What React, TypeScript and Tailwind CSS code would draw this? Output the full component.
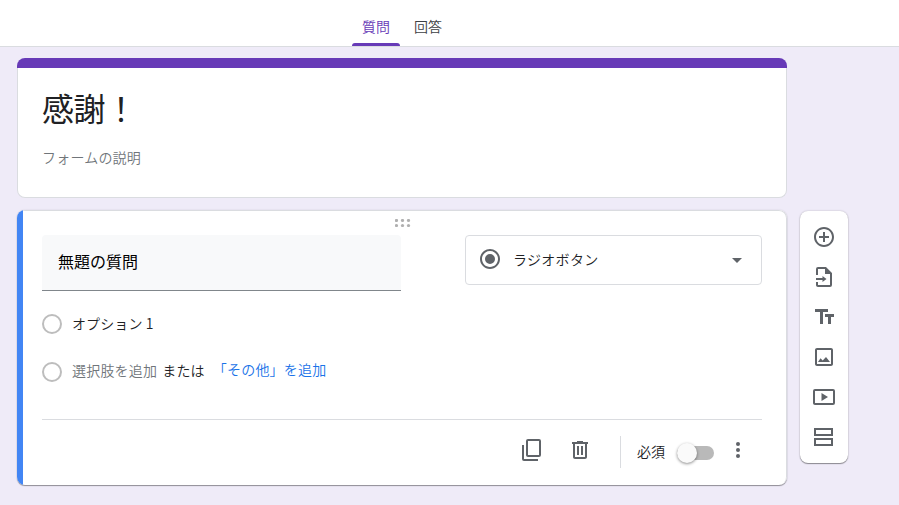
import type { ReactNode } from "react";

function Icon({ children, className = "" }: { children: ReactNode; className?: string }) {
  return (
    <svg viewBox="0 0 24 24" className={`block size-6 shrink-0 fill-[#5f6368] ${className}`}>
      {children}
    </svg>
  );
}

function Header() {
  return (
    <header className="flex h-[47px] border-b border-[#dadce0] bg-white pl-[352px] text-[14px] leading-5">
      <div className="flex h-[46px] w-12 flex-col justify-between pt-4 text-[#673ab7]">
        <span className="text-center">質問</span>
        <div className="h-[3px] rounded-t-[3px] bg-[#673ab7]" />
      </div>
      <div className="ml-1 w-12 pt-4 text-center text-[#3c4043]">回答</div>
    </header>
  );
}

function TitleCard() {
  return (
    <section className="h-[140px]">
      <div className="h-2.5 rounded-t-lg bg-[#673ab7]" />
      <div className="flow-root h-[130px] rounded-b-lg border border-t-0 border-[#dadce0] bg-white">
        <h1 className="ml-6 mt-[19px] text-[32px] font-normal leading-10 tracking-[-0.5px] text-[#202124]">感謝！</h1>
        <p className="ml-6 mt-5 text-[14px] leading-5 tracking-[0.2px] text-[#70757a]">フォームの説明</p>
      </div>
    </section>
  );
}

function DragHandle() {
  return (
    <svg viewBox="0 0 16 8" className="mx-auto block h-2 w-4 fill-[#b0b0b0]">
      {[1.5, 7.5, 13.5].map((x) => (
        <g key={x}>
          <circle cx={x} cy="1.5" r="1.6" />
          <circle cx={x} cy="6.5" r="1.6" />
        </g>
      ))}
    </svg>
  );
}

function Radio() {
  return <span className="size-5 shrink-0 rounded-full border-2 border-[#bdbdbd]" />;
}

function QuestionCard() {
  return (
    <section className="mt-3 flex h-[275px] overflow-hidden rounded-lg bg-white shadow-[0_1px_1px_rgba(0,0,0,0.38),0_0_2px_rgba(0,0,0,0.12)]">
      <div className="w-1.5 shrink-0 bg-[#4285f4]" />
      <div className="flex-1 rounded-r-lg border-r border-t border-[#dadce0] pl-[19px] pr-6 pt-2">
        <div className="pl-px">
          <DragHandle />
        </div>
        <div className="mt-2 flex justify-between">
          <div className="h-14 w-[359px] rounded-t border-b border-[#80868b] bg-[#f8f9fa] pl-4 pt-3.5 text-[16px] font-normal leading-6 text-black">
            無題の質問
          </div>
          <div className="flex h-[50px] w-[297px] items-center rounded border border-[#dadce0] px-3 text-[14px] text-[#202124]">
            <Icon className="mb-0.5">
              <path d="M12 7a5 5 0 1 0 0 10 5 5 0 0 0 0-10zm0-5C6.48 2 2 6.48 2 12s4.48 10 10 10 10-4.48 10-10S17.52 2 12 2zm0 18c-4.42 0-8-3.58-8-8s3.58-8 8-8 8 3.58 8 8-3.58 8-8 8z" />
            </Icon>
            <span className="mb-0.5 ml-[11px] flex-1 leading-5 tracking-[0.3px]">ラジオボタン</span>
            <Icon>
              <path d="M7 10l5 5 5-5z" />
            </Icon>
          </div>
        </div>
        <div className="mt-[23px] flex h-5 items-center text-[14px] leading-5 tracking-[0.1px] text-[#202124]">
          <Radio />
          <span className="mb-0.5 ml-2.5">オプション 1</span>
        </div>
        <div className="mt-7 flex h-5 items-center text-[14px] leading-5 tracking-[0.2px]">
          <Radio />
          <span className="mb-1 ml-2.5 text-[#70757a]">選択肢を追加</span>
          <span className="mb-1 ml-[5px] text-[#202124]">または</span>
          <span className="mb-1.5 ml-2 text-[#1a73e8]">「その他」を追加</span>
        </div>
        <div className="mt-[37px] flex h-16 items-center justify-end border-t border-[#dadce0] pr-3">
          <Icon className="mb-1">
            <path
              fillRule="evenodd"
              d="M21 1H8a2 2 0 0 0-2 2v14c0 1.1.9 2 2 2h11a2 2 0 0 0 2-2V3a2 2 0 0 0-2-2zm-2 16H8V3h11v14zM2 7h2v14h14v2H4a2 2 0 0 1-2-2V7z"
            />
          </Icon>
          <Icon className="mb-1 ml-6">
            <path d="M15 4V3H9v1H4v2h1v13c0 1.1.9 2 2 2h10c1.1 0 2-.9 2-2V6h1V4h-5zm2 15H7V6h10v13zM9 8h2v9H9zm4 0h2v9h-2z" />
          </Icon>
          <div className="ml-7 h-8 w-px bg-[#dadce0]" />
          <span className="mb-0.5 ml-4 text-[14px] leading-5 text-[#202124]">必須</span>
          <div className="ml-3 mt-0.5 flex h-5 w-[37px] items-center">
            <div className="flex h-3.5 w-full items-center rounded-full bg-[#b9b9b9]">
              <div className="size-5 rounded-full bg-[#fafafa] shadow-[0_1px_3px_rgba(0,0,0,0.45)]" />
            </div>
          </div>
          <Icon className="mb-1 ml-3">
            <circle cx="12" cy="6" r="2" />
            <circle cx="12" cy="12" r="2" />
            <circle cx="12" cy="18" r="2" />
          </Icon>
        </div>
      </div>
    </section>
  );
}

function Toolbar() {
  return (
    <aside className="mt-[153px] flex h-[252px] w-12 flex-col items-center gap-4 rounded-lg bg-white pt-3.5 shadow-[0_1px_1px_rgba(0,0,0,0.38),0_0_2px_rgba(0,0,0,0.24)]">
      <Icon>
        <path d="M13 7h-2v4H7v2h4v4h2v-4h4v-2h-4V7zm-1-5C6.48 2 2 6.48 2 12s4.48 10 10 10 10-4.48 10-10S17.52 2 12 2zm0 18c-4.41 0-8-3.59-8-8s3.59-8 8-8 8 3.59 8 8-3.59 8-8 8z" />
      </Icon>
      <Icon>
        <path d="M14 2H6a2 2 0 0 0-2 2v6h2V4h7v5h5v11H6v-3H4v3c0 1.1.9 2 2 2h12a2 2 0 0 0 2-2V8l-6-6zM4 13v2h6.5v2l4-3-4-3v2H4z" />
      </Icon>
      <Icon>
        <path d="M3 4v3h5v12h3V7h5V4H3zm19 5h-9v3h3v7h3v-7h3V9z" />
      </Icon>
      <Icon>
        <path d="M19 5v14H5V5h14m0-2H5c-1.1 0-2 .9-2 2v14c0 1.1.9 2 2 2h14c1.1 0 2-.9 2-2V5c0-1.1-.9-2-2-2zM6 17l2.5-3.8 2.2 2.2L14 12l4 5z" />
      </Icon>
      <Icon>
        <path d="M9.5 8v8l6.5-4-6.5-4zM21 4H3a2 2 0 0 0-2 2v12c0 1.1.9 2 2 2h18a2 2 0 0 0 2-2V6a2 2 0 0 0-2-2zm0 14H3V6h18v12z" />
      </Icon>
      <Icon>
        <path fillRule="evenodd" d="M2 3h19v8H2V3zm2 2v4h15V5H4zM2 13h19v8H2v-8zm2 2v4h15v-4H4z" />
      </Icon>
    </aside>
  );
}

export default function App() {
  return (
    <div className="h-[505px] w-[899px] overflow-hidden bg-[#efebf8] font-['Noto_Sans_CJK_JP',sans-serif] font-[350]">
      <Header />
      <div className="flex pl-[17px] pt-[11px]">
        <main className="w-[770px]">
          <TitleCard />
          <QuestionCard />
        </main>
        <div className="ml-[13px]">
          <Toolbar />
        </div>
      </div>
    </div>
  );
}
